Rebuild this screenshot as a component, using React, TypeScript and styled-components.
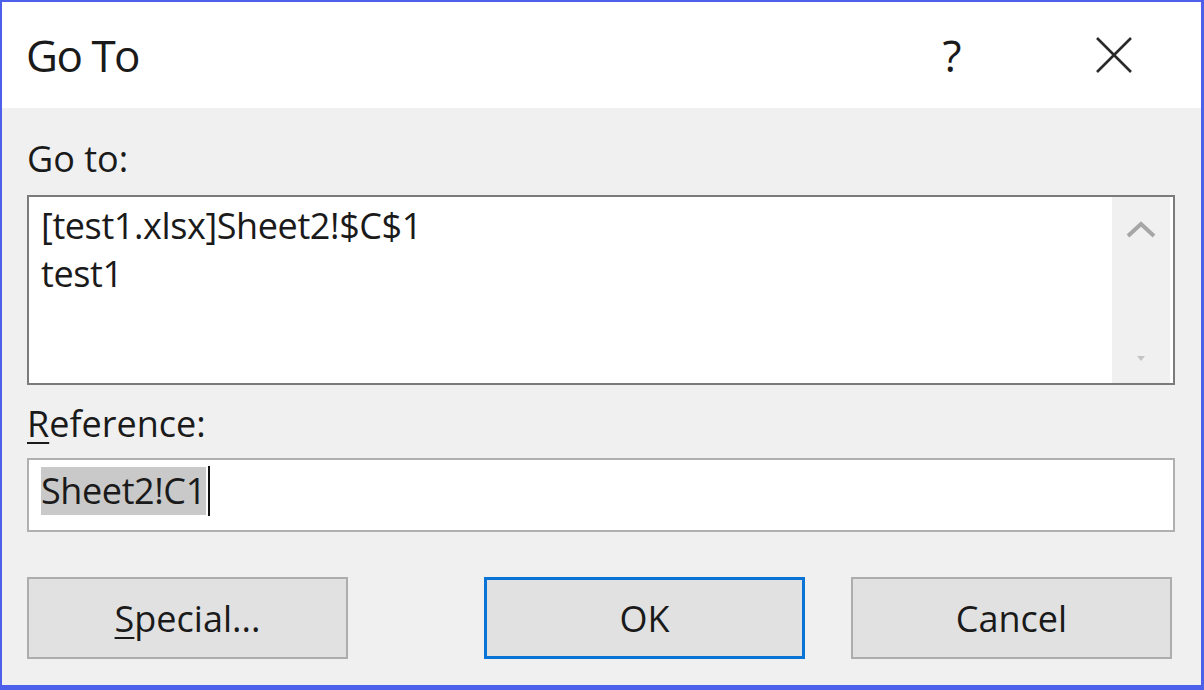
import React from "react";
import styled, { createGlobalStyle } from "styled-components";

const GlobalStyle = createGlobalStyle`
  html, body { margin: 0; padding: 0; background: #ffffff; }
  body { font-family: "Open Sans", "Noto Sans", Arial, sans-serif; color: #1a1a1a; }
  * { box-sizing: border-box; }
`;

const Frame = styled.div`
  width: 1204px;
  height: 690px;
  border-style: solid;
  border-color: #4d60ec;
  border-width: 2px 3px 5px 2px;
  display: flex;
  flex-direction: column;
  background: #f0f0f0;
  overflow: hidden;
`;

const TitleBar = styled.div`
  height: 106px;
  flex: none;
  background: #ffffff;
  display: flex;
  align-items: center;
  padding-left: 24px;
`;

const Title = styled.div`
  font-size: 44px;
  letter-spacing: -1.5px;
  line-height: 1;
  color: #1a1a1a;
  flex: 1;
`;

const HelpGlyph = styled.div`
  font-size: 44px;
  line-height: 1;
  color: #1a1a1a;
  width: 24px;
  text-align: center;
  margin-right: 131px;
`;

const CloseBox = styled.div`
  width: 38px;
  height: 38px;
  margin-right: 68px;
  display: flex;
  align-items: center;
  justify-content: center;
`;

const Body = styled.div`
  flex: 1;
  display: flex;
  flex-direction: column;
  padding: 27px 26px 0 25px;
`;

const Label = styled.div<{ $gap: number }>`
  font-size: 36px;
  line-height: 48px;
  color: #1a1a1a;
  margin-top: ${(p) => p.$gap}px;
  u { text-decoration-thickness: 2px; text-underline-offset: 5px; }
`;

const ListBox = styled.div`
  margin-top: 12px;
  height: 190px;
  border: 2px solid #7b7b7b;
  background: #ffffff;
  display: flex;
`;

const ListItems = styled.div`
  flex: 1;
  padding: 5px 0 0 12px;
  font-size: 36px;
  line-height: 48px;
  letter-spacing: -0.4px;
  color: #1a1a1a;
`;

const ScrollTrack = styled.div`
  width: 58px;
  margin-right: 3px;
  background: #f0f0f0;
  display: flex;
  flex-direction: column;
  align-items: center;
  justify-content: space-between;
  padding: 22px 0 22px;
`;

const TextInput = styled.div`
  margin-top: 10px;
  height: 74px;
  border: 2px solid #b0b0b0;
  background: #ffffff;
  padding: 7px 0 0 12px;
  display: flex;
  align-items: flex-start;
`;

const Selected = styled.span`
  background: #c9c9c9;
  font-size: 36px;
  line-height: 48px;
  letter-spacing: -0.4px;
  color: #1a1a1a;
`;

const Caret = styled.span`
  width: 2px;
  height: 50px;
  margin-top: -1px;
  margin-left: 2px;
  background: #111;
`;

const ButtonRow = styled.div`
  margin-top: 45px;
  display: flex;
  padding-right: 3px;
`;

const Button = styled.div<{ $default?: boolean; $ml: string }>`
  width: 321px;
  height: 82px;
  flex: none;
  background: #e1e1e1;
  border: ${(p) => (p.$default ? "3px solid #0a74d6" : "2px solid #adadad")};
  display: flex;
  align-items: center;
  justify-content: center;
  font-size: 36px;
  color: #1a1a1a;
  margin-left: ${(p) => p.$ml};
  u { text-decoration-thickness: 2px; text-underline-offset: 5px; }
`;

export default function App() {
  return (
    <>
      <GlobalStyle />
      <Frame>
        <TitleBar>
          <Title>Go To</Title>
          <HelpGlyph>?</HelpGlyph>
          <CloseBox>
            <svg width="38" height="38" viewBox="0 0 38 38">
              <path d="M2 2 L36 36 M36 2 L2 36" stroke="#2a2a2a" strokeWidth="2.6" fill="none" />
            </svg>
          </CloseBox>
        </TitleBar>
        <Body>
          <Label $gap={0}>Go to:</Label>
          <ListBox>
            <ListItems>
              <div>[test1.xlsx]Sheet2!$C$1</div>
              <div>test1</div>
            </ListItems>
            <ScrollTrack>
              <svg width="32" height="20" viewBox="0 0 32 20">
                <path d="M3 17 L16 5 L29 17" stroke="#a6a6a6" strokeWidth="4" fill="none" />
              </svg>
              <svg width="8" height="5" viewBox="0 0 8 5">
                <path d="M0 0 L8 0 L4 5 Z" fill="#c4c4c4" />
              </svg>
            </ScrollTrack>
          </ListBox>
          <Label $gap={15}>
            <u>R</u>eference:
          </Label>
          <TextInput>
            <Selected>Sheet2!C1</Selected>
            <Caret />
          </TextInput>
          <ButtonRow>
            <Button $ml="0">
              <span>
                <u>S</u>pecial...
              </span>
            </Button>
            <Button $default $ml="auto">OK</Button>
            <Button $ml="46px">Cancel</Button>
          </ButtonRow>
        </Body>
      </Frame>
    </>
  );
}
